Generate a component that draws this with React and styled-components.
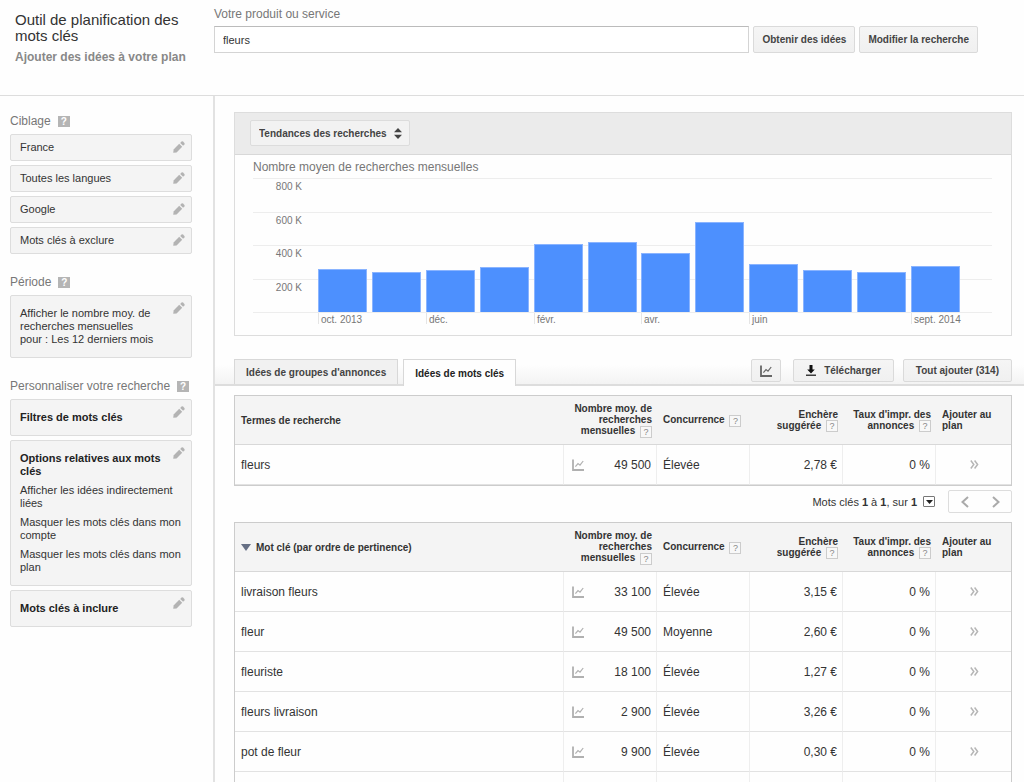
import React from 'react';
import styled, { createGlobalStyle, css } from 'styled-components';

const targeting = ['France', 'Toutes les langues', 'Google', 'Mots clés à exclure'];

const months = [
  { value: 43, label: 'oct. 2013' },
  { value: 40 },
  { value: 42, label: 'déc.' },
  { value: 45 },
  { value: 68, label: 'févr.' },
  { value: 70 },
  { value: 59, label: 'avr.' },
  { value: 90 },
  { value: 48, label: 'juin' },
  { value: 42 },
  { value: 40 },
  { value: 46, label: 'sept. 2014' },
];

const baseline = 137;

const gridLines = [
  { y: 3, label: '800 K' },
  { y: 37, label: '600 K' },
  { y: 70, label: '400 K' },
  { y: 104, label: '200 K' },
  { y: baseline },
];

const searchTerms = [
  { term: 'fleurs', volume: '49 500', competition: 'Élevée', bid: '2,78 €', share: '0 %' },
];

const keywords = [
  { term: 'livraison fleurs', volume: '33 100', competition: 'Élevée', bid: '3,15 €', share: '0 %' },
  { term: 'fleur', volume: '49 500', competition: 'Moyenne', bid: '2,60 €', share: '0 %' },
  { term: 'fleuriste', volume: '18 100', competition: 'Élevée', bid: '1,27 €', share: '0 %' },
  { term: 'fleurs livraison', volume: '2 900', competition: 'Élevée', bid: '3,26 €', share: '0 %' },
  { term: 'pot de fleur', volume: '9 900', competition: 'Élevée', bid: '0,30 €', share: '0 %' },
];

const PencilIcon = () => (
  <Pencil width="12" height="12" viewBox="0 0 12 12" aria-hidden="true">
    <path d="M0.2 11.8 L0.6 8.4 L6.2 2.8 L9.2 5.8 L3.6 11.4 Z" />
    <path d="M7.2 1.9 L8.5 0.6 Q9.3 0 10.1 0.6 L11.4 1.9 Q12 2.7 11.4 3.5 L10.1 4.8 Z" />
  </Pencil>
);

const ChartIcon = ({ color }) => (
  <svg width="12" height="12" viewBox="0 0 12 12" fill="none" stroke={color} aria-hidden="true">
    <path d="M1 0.5 V11 H12" strokeWidth="1.8" />
    <path d="M3.4 7.6 L6 4.6 L8 6.2 L11.2 2" strokeWidth="1.2" />
  </svg>
);

const DownloadIcon = () => (
  <svg width="10" height="11" viewBox="0 0 10 11" aria-hidden="true">
    <path d="M3.5 0 H6.5 V4.4 H8.8 L5 8.6 L1.2 4.4 H3.5 Z" fill="#111" />
    <path d="M0 9.6 H10 V10.8 H0 Z" fill="#111" />
  </svg>
);

const KeywordTable = ({ title, sorted, rows, children }) => (
  <Table>
    <colgroup>
      <col />
      <Col />
      <Col />
      <Col />
      <Col />
      <Col $last />
    </colgroup>
    <thead>
      <tr>
        <Th>
          {sorted && (
            <SortArrow width="10" height="7" viewBox="0 0 10 7" aria-hidden="true">
              <path d="M0 0 H10 L5 7 Z" fill="#667085" />
            </SortArrow>
          )}
          {title}
        </Th>
        <Th $right>Nombre moy. de recherches mensuelles <Help>?</Help></Th>
        <Th>Concurrence <Help>?</Help></Th>
        <Th $right>Enchère suggérée <Help>?</Help></Th>
        <Th $right>Taux d'impr. des annonces <Help>?</Help></Th>
        <Th>Ajouter au plan</Th>
      </tr>
    </thead>
    <tbody>
      {rows.map(row => (
        <tr key={row.term}>
          <Td>{row.term}</Td>
          <Td>
            <Volume>
              <ChartIcon color="#b0b0b0" />
              {row.volume}
            </Volume>
          </Td>
          <Td>{row.competition}</Td>
          <Td $right>{row.bid}</Td>
          <Td $right>{row.share}</Td>
          <Td $center>
            <AddButton aria-label={`Ajouter ${row.term}`}>
              <svg width="9" height="9" viewBox="0 0 9 9" fill="none" stroke="#b5b5b5" strokeWidth="1.5">
                <path d="M0.8 0.5 L3.8 4.5 L0.8 8.5 M4.6 0.5 L7.6 4.5 L4.6 8.5" />
              </svg>
            </AddButton>
          </Td>
        </tr>
      ))}
      {children}
    </tbody>
  </Table>
);

const Chart = () => (
  <ChartSvg viewBox="0 0 739 153" role="img" aria-label="Nombre moyen de recherches mensuelles">
    {gridLines.map(line => (
      <g key={line.y}>
        <rect x="0" y={line.y} width="739" height="1" fill="#ededed" />
        {line.label && <text x="49" y={line.y + 12} textAnchor="end">{line.label}</text>}
      </g>
    ))}
    {months.map((month, i) => {
      const x = Math.round(65 + i * 53.9);
      return (
        <g key={i}>
          <rect x={x} y={baseline - month.value} width="49" height={month.value} fill="#8ab4ff" />
          <rect x={x + 1} y={baseline + 1 - month.value} width="47" height={month.value - 1} fill="#4d90fe" />
          {month.label && (
            <>
              <rect x={x} y={baseline + 1} width="1" height="11" fill="#e5e5e5" />
              <text x={x + 3} y={baseline + 11}>{month.label}</text>
            </>
          )}
        </g>
      );
    })}
  </ChartSvg>
);

const App = () => {
  return (
    <>
      <GlobalStyle />
      <Page>
        <Header>
          <Heading>
            <Title>Outil de planification des mots clés</Title>
            <Subtitle>Ajouter des idées à votre plan</Subtitle>
          </Heading>
          <SearchForm onSubmit={e => e.preventDefault()}>
            <SearchLabel htmlFor="product">Votre produit ou service</SearchLabel>
            <SearchRow>
              <SearchInput id="product" type="text" defaultValue="fleurs" />
              <Button $tall>Obtenir des idées</Button>
              <Button $tall>Modifier la recherche</Button>
            </SearchRow>
          </SearchForm>
        </Header>
        <Body>
          <Sidebar>
            <Section>
              <SectionTitle>Ciblage <Help $solid>?</Help></SectionTitle>
              {targeting.map(item => (
                <Card key={item}>
                  {item}
                  <PencilIcon />
                </Card>
              ))}
            </Section>
            <Section>
              <SectionTitle>Période <Help $solid>?</Help></SectionTitle>
              <Card $roomy>
                <CardText $narrow>Afficher le nombre moy. de recherches mensuelles pour&nbsp;: Les 12 derniers mois</CardText>
                <PencilIcon />
              </Card>
            </Section>
            <Section>
              <SectionTitle>Personnaliser votre recherche <Help $solid>?</Help></SectionTitle>
              <Card $roomy>
                <CardText $narrow $bold>Filtres de mots clés</CardText>
                <PencilIcon />
              </Card>
              <Card $roomy>
                <CardText $narrow $bold>Options relatives aux mots clés</CardText>
                <CardText>Afficher les idées indirectement liées</CardText>
                <CardText>Masquer les mots clés dans mon compte</CardText>
                <CardText>Masquer les mots clés dans mon plan</CardText>
                <PencilIcon />
              </Card>
              <Card $roomy>
                <CardText $narrow $bold>Mots clés à inclure</CardText>
                <PencilIcon />
              </Card>
            </Section>
          </Sidebar>
          <Main>
            <Panel>
              <PanelBar>
                <SelectBox>
                  <Select aria-label="Graphique">
                    <option>Tendances des recherches</option>
                  </Select>
                  <SelectArrows width="8" height="11" viewBox="0 0 8 11" aria-hidden="true">
                    <path d="M0 4.3 L4 0 L8 4.3 Z M0 6.7 L4 11 L8 6.7 Z" fill="#444" />
                  </SelectArrows>
                </SelectBox>
              </PanelBar>
              <PanelBody>
                <ChartTitle>Nombre moyen de recherches mensuelles</ChartTitle>
                <Chart />
              </PanelBody>
            </Panel>
            <TabBar>
              <Tab>Idées de groupes d'annonces</Tab>
              <Tab $active>Idées de mots clés</Tab>
              <Actions>
                <Button $icon aria-label="Graphique"><ChartIcon color="#666" /></Button>
                <Button $wide><DownloadIcon />Télécharger</Button>
                <Button>Tout ajouter (314)</Button>
              </Actions>
            </TabBar>
            <Results>
              <KeywordTable title="Termes de recherche" rows={searchTerms} />
              <Pagination>
                <span>Mots clés <b>1</b> à <b>1</b>, sur <b>1</b></span>
                <PageMenu aria-label="Lignes">
                  <svg width="7" height="4" viewBox="0 0 7 4"><path d="M0 0 H7 L3.5 4 Z" fill="#222" /></svg>
                </PageMenu>
                <Pager>
                  <PageButton aria-label="Page précédente">
                    <svg width="8" height="12" viewBox="0 0 8 12"><path d="M7 1 L1.5 6 L7 11" /></svg>
                  </PageButton>
                  <PageButton aria-label="Page suivante">
                    <svg width="8" height="12" viewBox="0 0 8 12"><path d="M1 1 L6.5 6 L1 11" /></svg>
                  </PageButton>
                </Pager>
              </Pagination>
              <KeywordTable title="Mot clé (par ordre de pertinence)" sorted rows={keywords}>
                <tr>
                  <Td /><Td /><Td /><Td /><Td /><Td />
                </tr>
              </KeywordTable>
            </Results>
          </Main>
        </Body>
      </Page>
    </>
  );
};

const GlobalStyle = createGlobalStyle`
  * {
    box-sizing: border-box;
  }
  body {
    margin: 0;
    background: #fefefe;
    color: #333;
    font-family: "Liberation Sans", Arial, sans-serif;
    font-size: 12px;
  }
  button, input, select {
    font-family: inherit;
    color: inherit;
    margin: 0;
  }
`
const Page = styled.div`
  display: flex;
  flex-direction: column;
  height: 100vh;
  overflow: hidden;
`
const Header = styled.header`
  display: flex;
  flex: none;
  height: 96px;
  border-bottom: 1px solid #ddd;
`
const Heading = styled.div`
  width: 214px;
  padding: 12px 30px 0 15px;
`
const Title = styled.h1`
  margin: 0;
  font-size: 15px;
  line-height: 16px;
  font-weight: normal;
`
const Subtitle = styled.div`
  margin-top: 6px;
  font-size: 12px;
  line-height: 15px;
  font-weight: bold;
  color: #888;
  white-space: nowrap;
`
const SearchForm = styled.form`
  flex: 1;
  padding: 7px 46px 0 0;
`
const SearchLabel = styled.label`
  display: block;
  line-height: 15px;
  color: #777;
`
const SearchRow = styled.div`
  display: flex;
  gap: 4px;
  margin-top: 4px;
`
const SearchInput = styled.input`
  flex: 1;
  min-width: 0;
  height: 27px;
  padding: 0 8px;
  border: 1px solid #d4d4d4;
  border-top-color: #bbb;
  background: #fff;
  font-size: 11px;
`
const Button = styled.button`
  display: flex;
  align-items: center;
  justify-content: center;
  gap: 8px;
  height: ${props => (props.$tall ? '27px' : '23px')};
  padding: 0 ${props => (props.$tall ? '8px' : '12px')};
  border: 1px solid #dadada;
  border-radius: 2px;
  background: linear-gradient(#f5f5f5, #f0f0f0);
  color: #444;
  font-size: 10px;
  font-weight: bold;
  white-space: nowrap;

  ${props => props.$icon && css`
    width: 30px;
    padding: 0;
  `}

  ${props => props.$wide && css`
    margin: 0 9px 0 12px;
  `}
`
const Body = styled.div`
  display: flex;
  flex: 1;
  min-height: 0;
`
const Sidebar = styled.aside`
  flex: none;
  width: 215px;
  padding: 16px 21px 0 10px;
  border-right: 2px solid #e2e2e2;
`
const Section = styled.section`
  display: flex;
  flex-direction: column;
  gap: 4px;
  margin-bottom: 19px;
`
const SectionTitle = styled.h2`
  display: flex;
  align-items: center;
  gap: 7px;
  margin: 0;
  height: 18px;
  font-size: 12px;
  font-weight: normal;
  color: #777;
  white-space: nowrap;
`
const Help = styled.span`
  display: inline-block;
  width: 12px;
  height: 12px;
  margin: -1px 0 -1px 2px;
  border: 1px solid #ccc;
  background: #f8f8f8;
  color: #888;
  font-size: 9px;
  line-height: 10px;
  font-weight: normal;
  text-align: center;
  vertical-align: middle;

  ${props => props.$solid && css`
    margin: 0;
    height: 11px;
    border: none;
    background: #b5b5b5;
    color: #fff;
    font-size: 10px;
    line-height: 11px;
    font-weight: bold;
  `}
`
const Card = styled.button`
  display: flex;
  flex-direction: column;
  justify-content: center;
  gap: 6px;
  position: relative;
  width: 100%;
  min-height: 27px;
  padding: 0 5px 0 9px;
  border: 1px solid #ddd;
  border-radius: 2px;
  background: #f4f4f4;
  color: #333;
  font-size: 11px;
  line-height: 13px;
  text-align: left;

  ${props => props.$roomy && css`
    padding-top: 11px;
    padding-bottom: 11px;
  `}
`
const CardText = styled.span`
  padding-right: ${props => (props.$narrow ? '24px' : '0')};
  font-weight: ${props => (props.$bold ? 'bold' : 'normal')};
  color: ${props => (props.$bold ? '#222' : '#333')};
`
const Pencil = styled.svg`
  position: absolute;
  top: 6px;
  right: 6px;
  fill: #b3b3b3;
`
const Main = styled.main`
  flex: 1;
  min-width: 0;
`
const Panel = styled.section`
  margin: 16px 12px 0 19px;
  border: 1px solid #ddd;
`
const PanelBar = styled.div`
  padding: 7px 15px 8px;
  border-bottom: 1px solid #d8d8d8;
  background: #ebebeb;
`
const SelectBox = styled.div`
  display: inline-flex;
  position: relative;
  vertical-align: top;
`
const Select = styled.select`
  appearance: none;
  width: 160px;
  height: 26px;
  padding: 0 8px;
  border: 1px solid #dcdcdc;
  border-radius: 2px;
  background: #f2f2f2;
  color: #444;
  font-size: 10px;
  font-weight: bold;
`
const SelectArrows = styled.svg`
  position: absolute;
  right: 8px;
  top: 8px;
  pointer-events: none;
`
const PanelBody = styled.div`
  padding: 4px 19px 7px 18px;
`
const ChartTitle = styled.div`
  line-height: 16px;
  color: #777;
`
const ChartSvg = styled.svg`
  display: block;
  width: 100%;

  text {
    fill: #777;
    font-size: 10px;
  }
`
const TabBar = styled.div`
  display: flex;
  align-items: flex-end;
  gap: 5px;
  height: 50px;
  padding: 0 12px 0 19px;
  border-bottom: 2px solid #ddd;
  background: linear-gradient(transparent 60%, #f3f3f3);
`
const Tab = styled.button`
  height: 25px;
  padding: 0 11px;
  border: 1px solid #d8d8d8;
  border-bottom: none;
  background: #f1f1f1;
  color: #444;
  font-size: 10px;
  font-weight: bold;
  white-space: nowrap;

  ${props => props.$active && css`
    height: 27px;
    margin-bottom: -2px;
    background: #fefefe;
    color: #222;
  `}
`
const Actions = styled.div`
  display: flex;
  margin-left: auto;
  padding-bottom: 2px;
`
const Results = styled.div`
  padding: 9px 12px 0 19px;
`
const Table = styled.table`
  width: 100%;
  table-layout: fixed;
  border-collapse: separate;
  border-spacing: 0;
  border: 1px solid #ccc;
`
const Col = styled.col`
  width: ${props => (props.$last ? '75px' : '93px')};
`
const Th = styled.th`
  height: 49px;
  padding: 0 5px 0 6px;
  border-bottom: 1px solid #d8d8d8;
  background: #f4f4f4;
  font-size: 10px;
  line-height: 11px;
  text-align: ${props => (props.$right ? 'right' : 'left')};
`
const Td = styled.td`
  height: 40px;
  padding: 0 5px 0 6px;
  border-bottom: 1px solid #e2e2e2;
  border-right: 1px solid #eee;
  font-size: 12px;
  text-align: ${props => (props.$right ? 'right' : props.$center ? 'center' : 'left')};

  &:last-child {
    border-right: none;
  }
`
const SortArrow = styled.svg`
  margin-right: 5px;
`
const Volume = styled.div`
  display: flex;
  align-items: center;
  justify-content: space-between;
  padding-left: 2px;
`
const AddButton = styled.button`
  padding: 0;
  border: none;
  background: none;
`
const Pagination = styled.div`
  display: flex;
  align-items: center;
  justify-content: flex-end;
  gap: 6px;
  padding: 4px 0 9px;
  font-size: 11px;
`
const PageMenu = styled.button`
  display: flex;
  align-items: center;
  justify-content: center;
  width: 12px;
  height: 11px;
  padding: 0;
  border: 1px solid #777;
  border-radius: 1px;
  background: #fff;
`
const Pager = styled.div`
  display: flex;
  margin-left: 7px;
  border: 1px solid #ddd;
  border-radius: 2px;
`
const PageButton = styled.button`
  display: flex;
  align-items: center;
  justify-content: center;
  width: 31px;
  height: 21px;
  padding: 0;
  border: none;
  background: none;

  path {
    fill: none;
    stroke: #aaa;
    stroke-width: 2;
  }
`
export default App;
